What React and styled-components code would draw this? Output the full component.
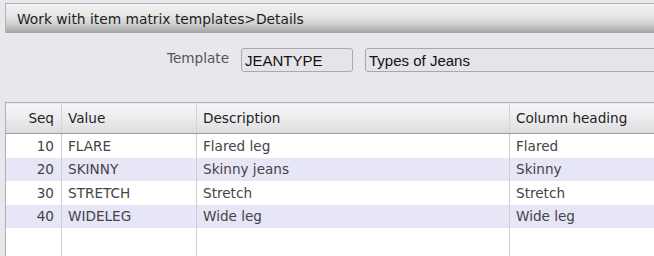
import React from 'react'
import styled, { createGlobalStyle } from 'styled-components'

const rows = [
    { seq: 10, value: 'FLARE', description: 'Flared leg', heading: 'Flared' },
    { seq: 20, value: 'SKINNY', description: 'Skinny jeans', heading: 'Skinny' },
    { seq: 30, value: 'STRETCH', description: 'Stretch', heading: 'Stretch' },
    { seq: 40, value: 'WIDELEG', description: 'Wide leg', heading: 'Wide leg' },
]

function App() {
    return (
        <Page>
            <GlobalStyle />
            <TitleBar>Work with item matrix templates&gt;Details</TitleBar>

            <FormRow>
                <Label>Template</Label>
                <Field width="112px">JEANTYPE</Field>
                <Field width="320px">Types of Jeans</Field>
            </FormRow>

            <Table>
                <colgroup>
                    <col style={{ width: 56 }} />
                    <col style={{ width: 135 }} />
                    <col style={{ width: 313 }} />
                    <col />
                </colgroup>
                <thead>
                    <tr>
                        <HeadCell align="right">Seq</HeadCell>
                        <HeadCell>Value</HeadCell>
                        <HeadCell>Description</HeadCell>
                        <HeadCell>Column heading</HeadCell>
                    </tr>
                </thead>
                <tbody>
                    {rows.map((r, i) => (
                        <Row key={r.seq} alt={i % 2 === 1}>
                            <Cell align="right">{r.seq}</Cell>
                            <Cell>{r.value}</Cell>
                            <Cell>{r.description}</Cell>
                            <Cell>{r.heading}</Cell>
                        </Row>
                    ))}
                    <FillerRow>
                        <Cell />
                        <Cell />
                        <Cell />
                        <Cell />
                    </FillerRow>
                </tbody>
            </Table>
        </Page>
    )
}

export default App


const GlobalStyle = createGlobalStyle`
    html, body {
        margin: 0;
        padding: 0;
        background: #e8e7ee;
        overflow: hidden;
    }
`

const Page = styled.div`
    width: 654px;
    height: 256px;
    padding: 3px 0 0 5px;
    box-sizing: border-box;
    font-family: "DejaVu Sans", Verdana, sans-serif;
    overflow: hidden;
`

const TitleBar = styled.div`
    height: 30px;
    width: 700px;
    box-sizing: border-box;
    border-top: 1px solid #b4b4b8;
    border-left: 1px solid #b4b4b8;
    background: linear-gradient(to bottom, #f2f2f2 0%, #e6e6e6 40%, #cfcfcf 70%, #b2b2b2 88%, #a2a2a4 100%);
    padding: 7px 0 0 11px;
    font-size: 13.8px;
    color: #1e1e1e;
`

const FormRow = styled.div`
    display: flex;
    align-items: center;
    margin-top: 15px;
    padding-left: 162px;
    height: 24px;
`

const Label = styled.span`
    font-size: 13.6px;
    color: #555;
    margin-right: 12px;
    margin-top: -4px;
`

const Field = styled.div`
    width: ${props => props.width};
    height: 24px;
    box-sizing: border-box;
    border: 1px solid #a9a9a9;
    border-radius: 3px;
    background: #e4e4ea;
    font-family: "Liberation Sans", Arial, sans-serif;
    font-size: 15px;
    color: #111;
    padding: 3px 0 0 3px;
    margin-right: 12px;
    flex-shrink: 0;
`

const Table = styled.table`
    margin-top: 30px;
    width: 700px;
    border-collapse: collapse;
    table-layout: fixed;
    border-top: 1px solid #b0b0b0;
    border-left: 1px solid #b0b0b0;
    font-size: 13.6px;
`

const HeadCell = styled.th`
    height: 30px;
    padding: 0 7px 0 6px;
    text-align: ${props => props.align || 'left'};
    font-weight: normal;
    color: #1e1e1e;
    background: linear-gradient(to bottom, #f6f6f8 0%, #ececef 50%, #dcdce0 100%);
    border-right: 1px solid #d4d4d8;
    border-bottom: 1px solid #9c9c9c;
`

const Row = styled.tr`
    background: ${props => props.alt ? '#e7e6f6' : '#ffffff'};
`

const FillerRow = styled.tr`
    background: #ffffff;
    height: 40px;
`

const Cell = styled.td`
    height: 23.5px;
    padding: 0 7px 0 6px;
    text-align: ${props => props.align || 'left'};
    color: #444;
    border-right: 1px solid #d0d0d4;
    white-space: nowrap;
`
